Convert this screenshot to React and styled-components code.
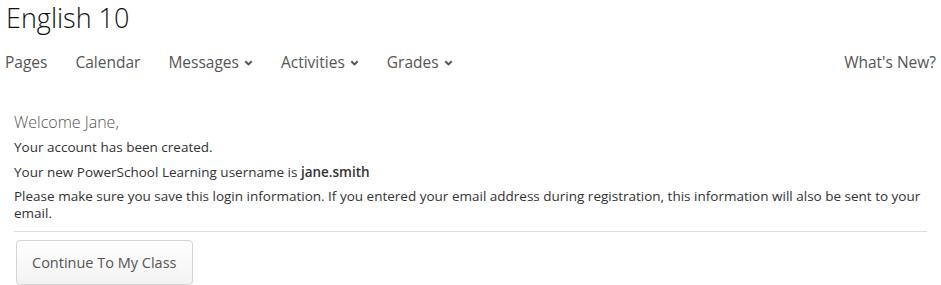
import React from "react";
import styled, { createGlobalStyle } from "styled-components";

const GlobalStyle = createGlobalStyle`
  body {
    margin: 0;
    background: #fff;
    font-family: "Open Sans", "Liberation Sans", sans-serif;
    color: #333;
  }
`;

const Page = styled.div`
  width: 941px;
`;

const Title = styled.h1`
  margin: 0;
  padding: 0 0 0 6px;
  font-size: 27px;
  font-weight: 300;
  line-height: 36px;
  color: #111;
`;

const Nav = styled.nav`
  display: flex;
  align-items: center;
  height: 52px;
  padding: 0 5px;
`;

const NavItem = styled.a`
  display: flex;
  align-items: center;
  gap: 5px;
  font-size: 15.5px;
  color: #555;
  text-decoration: none;
  margin-right: 28px;
  margin-left: ${(p) => (p.$right ? "auto" : "0")};
  ${(p) => p.$right && "margin-right: 0;"}
`;

const Chevron = () => (
  <svg width="9" height="6" viewBox="0 0 9 6" style={{ marginTop: "2px" }}>
    <path d="M1.3 1.3 L4.5 4.4 L7.7 1.3" fill="none" stroke="#555" strokeWidth="2" />
  </svg>
);

const Content = styled.div`
  padding: 22px 14px 0 14px;
  width: 913px;
`;

const Welcome = styled.div`
  font-size: 16px;
  font-weight: 300;
  color: #555;
  line-height: 24px;
  margin-bottom: 4px;
`;

const Para = styled.p`
  margin: 0 0 6px 0;
  font-size: 13.5px;
  line-height: ${(p) => (p.$wrap ? "17px" : "19px")};
  color: #333;

  b {
    font-weight: 600;
  }
`;

const Divider = styled.hr`
  border: 0;
  border-top: 1px solid #ddd;
  margin: 9px 0 8px 0;
`;

const Button = styled.button`
  margin-left: 2px;
  height: 45px;
  padding: 0 15px;
  font-family: inherit;
  font-size: 14.5px;
  color: #555;
  border: 1px solid #d4d4d4;
  border-radius: 4px;
  background: linear-gradient(#fff, #f3f3f3);
`;

export default function App() {
  return (
    <Page>
      <GlobalStyle />
      <Title>English 10</Title>
      <Nav>
        <NavItem>Pages</NavItem>
        <NavItem>Calendar</NavItem>
        <NavItem>
          Messages <Chevron />
        </NavItem>
        <NavItem>
          Activities <Chevron />
        </NavItem>
        <NavItem>
          Grades <Chevron />
        </NavItem>
        <NavItem $right>What's New?</NavItem>
      </Nav>
      <Content>
        <Welcome>Welcome Jane,</Welcome>
        <Para>Your account has been created.</Para>
        <Para>
          Your new PowerSchool Learning username is <b>jane.smith</b>
        </Para>
        <Para $wrap>
          Please make sure you save this login information. If you entered your email address during
          registration, this information will also be sent to your email.
        </Para>
        <Divider />
        <Button>Continue To My Class</Button>
      </Content>
    </Page>
  );
}
